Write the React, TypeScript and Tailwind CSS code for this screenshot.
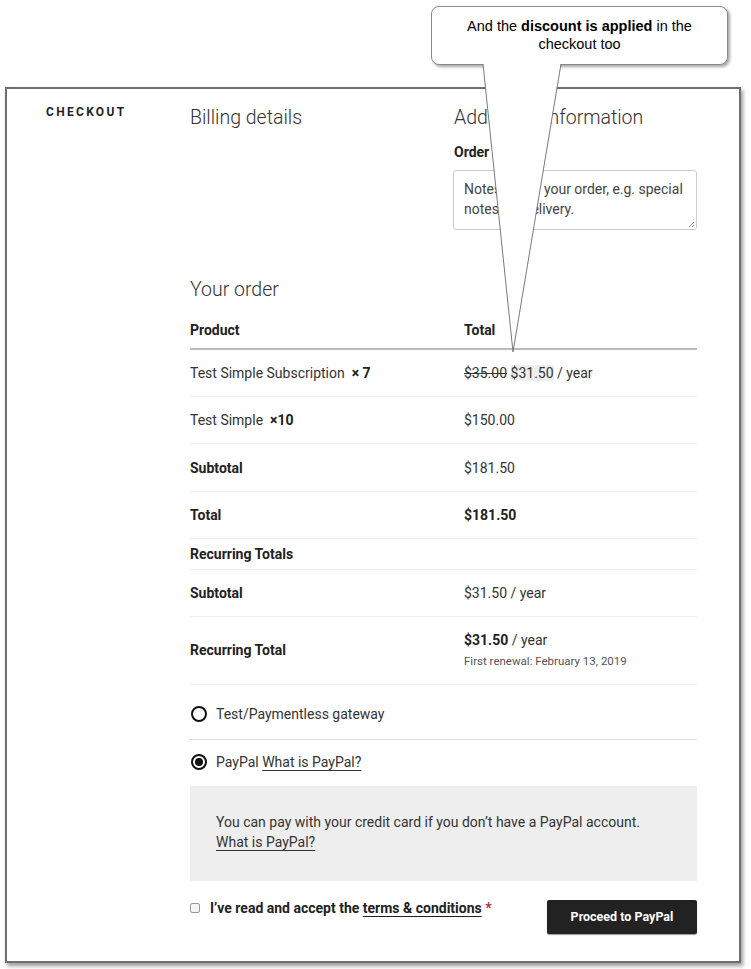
import React from 'react';

const Row: React.FC<{ label: React.ReactNode; value: React.ReactNode; bold?: boolean; className?: string }> = ({ label, value, bold, className }) => (
  <div className={`grid grid-cols-[274px_1fr] items-center border-b border-[#eeeeee] ${className ?? 'py-[13px]'}`}>
    <div className={bold ? 'font-bold text-[#222]' : ''}>{label}</div>
    <div>{value}</div>
  </div>
);

const Callout: React.FC = () => (
  <>
    <div className="absolute left-[431px] top-[6px] w-[297px] h-[59px] rounded-[8px] border border-[#8a8a8a] bg-white shadow-[2px_2px_3px_rgba(0,0,0,0.35)] pt-[10px] text-center text-[14.5px] leading-[18px] text-black font-['Liberation_Sans',Arial,sans-serif]">
      And the <b>discount is applied</b> in the
      <br />
      checkout too
    </div>
    {/* pointer of the callout */}
    <svg className="absolute left-0 top-0 pointer-events-none" width="751" height="400">
      <polygon points="483,62 513,352 561,62" fill="#ffffff" />
      <polyline points="483,64 513,352 561,64" fill="none" stroke="#7a7a7a" strokeWidth="1" />
    </svg>
  </>
);

export default function App() {
  return (
    <div className="relative w-[751px] h-[969px] bg-white overflow-hidden font-['Roboto','Liberation_Sans',sans-serif] text-[14px] leading-[20px] text-[#333]">
      <div className="absolute left-[5px] top-[87px] w-[736px] h-[876px] border-2 border-[#6f6f6f] bg-white shadow-[2px_3px_4px_rgba(0,0,0,0.4)] flex">
        <div className="w-[183px] shrink-0 pl-[39px] pt-[15px]">
          <div className="text-[12px] leading-[16px] font-bold tracking-[2.3px] text-[#222]">CHECKOUT</div>
        </div>

        <div className="w-[507px] shrink-0">
          <div className="grid grid-cols-[264px_1fr] pt-[14px]">
            <h2 className="text-[19.5px] leading-[30px] font-light text-[#333]">Billing details</h2>
            <div>
              <h2 className="text-[19.5px] leading-[30px] font-light text-[#333]">Additional information</h2>
              <div className="mt-[9px] font-bold text-[#222]">Order notes</div>
              <div className="relative mt-[8px] h-[60px] w-[244px] -ml-[1px] rounded-[3px] border border-[#cccccc] px-[10px] pt-[8px] text-[#444]">
                Notes about your order, e.g. special notes for delivery.
                <svg className="absolute right-[1px] bottom-[1px]" width="7" height="7" viewBox="0 0 7 7">
                  <path d="M1 6 L6 1 M4 6 L6 4" stroke="#888" strokeWidth="0.8" />
                </svg>
              </div>
            </div>
          </div>

          <h2 className="mt-[45px] text-[19.5px] leading-[30px] font-light text-[#333]">Your order</h2>

          <div className="mt-[15px]">
            <div className="grid grid-cols-[274px_1fr] pb-[8px] border-b-2 border-[#bbbbbb] font-bold text-[#222]">
              <div>Product</div>
              <div>Total</div>
            </div>
            <Row
              label={<>Test Simple Subscription&nbsp; <b className="text-[#222]">× 7</b></>}
              value={<><s>$35.00</s> <span className="bg-[#eeeeee]">$31.50</span> / year</>}
            />
            <Row label={<>Test Simple&nbsp; <b className="text-[#222]">×10</b></>} value="$150.00" />
            <Row bold label="Subtotal" value="$181.50" className="pt-[14px] pb-[13px]" />
            <Row bold label="Total" value={<b className="text-[#222]">$181.50</b>} />
            <div className="py-[5px] border-b border-[#eeeeee] font-bold text-[#222]">Recurring Totals</div>
            <Row bold label="Subtotal" value="$31.50 / year" />
            <Row
              bold
              className="pt-[13px] pb-[14px]"
              label="Recurring Total"
              value={
                <>
                  <div><b className="text-[#222]">$31.50</b> / year</div>
                  <div className="mt-[2px] text-[11.5px] leading-[18px] text-[#555]">First renewal: February 13, 2019</div>
                </>
              }
            />
          </div>

          <div className="flex items-center gap-[9px] pt-[19px] pb-[15px] border-b border-[#dddddd]">
            <span className="ml-[1px] w-[16px] h-[16px] rounded-full border-2 border-[#111] bg-white" />
            <span>Test/Paymentless gateway</span>
          </div>
          <div className="flex items-center gap-[9px] pt-[12px] pb-[14px]">
            <span className="ml-[1px] w-[16px] h-[16px] rounded-full border-2 border-[#111] bg-white flex items-center justify-center">
              <span className="w-[8px] h-[8px] rounded-full bg-[#111]" />
            </span>
            <span>
              PayPal <span className="underline underline-offset-[3px] decoration-[#333]">What is PayPal?</span>
            </span>
          </div>
          <div className="bg-[#eeeeee] px-[26px] pt-[26px] pb-[29px]">
            You can pay with your credit card if you don’t have a PayPal account.
            <br />
            <span className="underline underline-offset-[3px] decoration-[#333]">What is PayPal?</span>
          </div>

          <div className="mt-[19px] flex items-start justify-between">
            <div className="flex items-center gap-[10px] -mt-[2px]">
              <span className="w-[10px] h-[10px] rounded-[2px] border border-[#999] bg-[#f4f4f4]" />
              <span className="font-bold text-[#222]">
                I’ve read and accept the <span className="underline underline-offset-[3px]">terms &amp; conditions</span>{' '}
                <span className="text-[#a33]">*</span>
              </span>
            </div>
            <button className="w-[150px] h-[34px] rounded-[2px] bg-[#222] text-white text-[12.5px] font-bold shadow-[0_1px_1px_rgba(0,0,0,0.4)]">
              Proceed to PayPal
            </button>
          </div>
        </div>
      </div>

      <Callout />
    </div>
  );
}
